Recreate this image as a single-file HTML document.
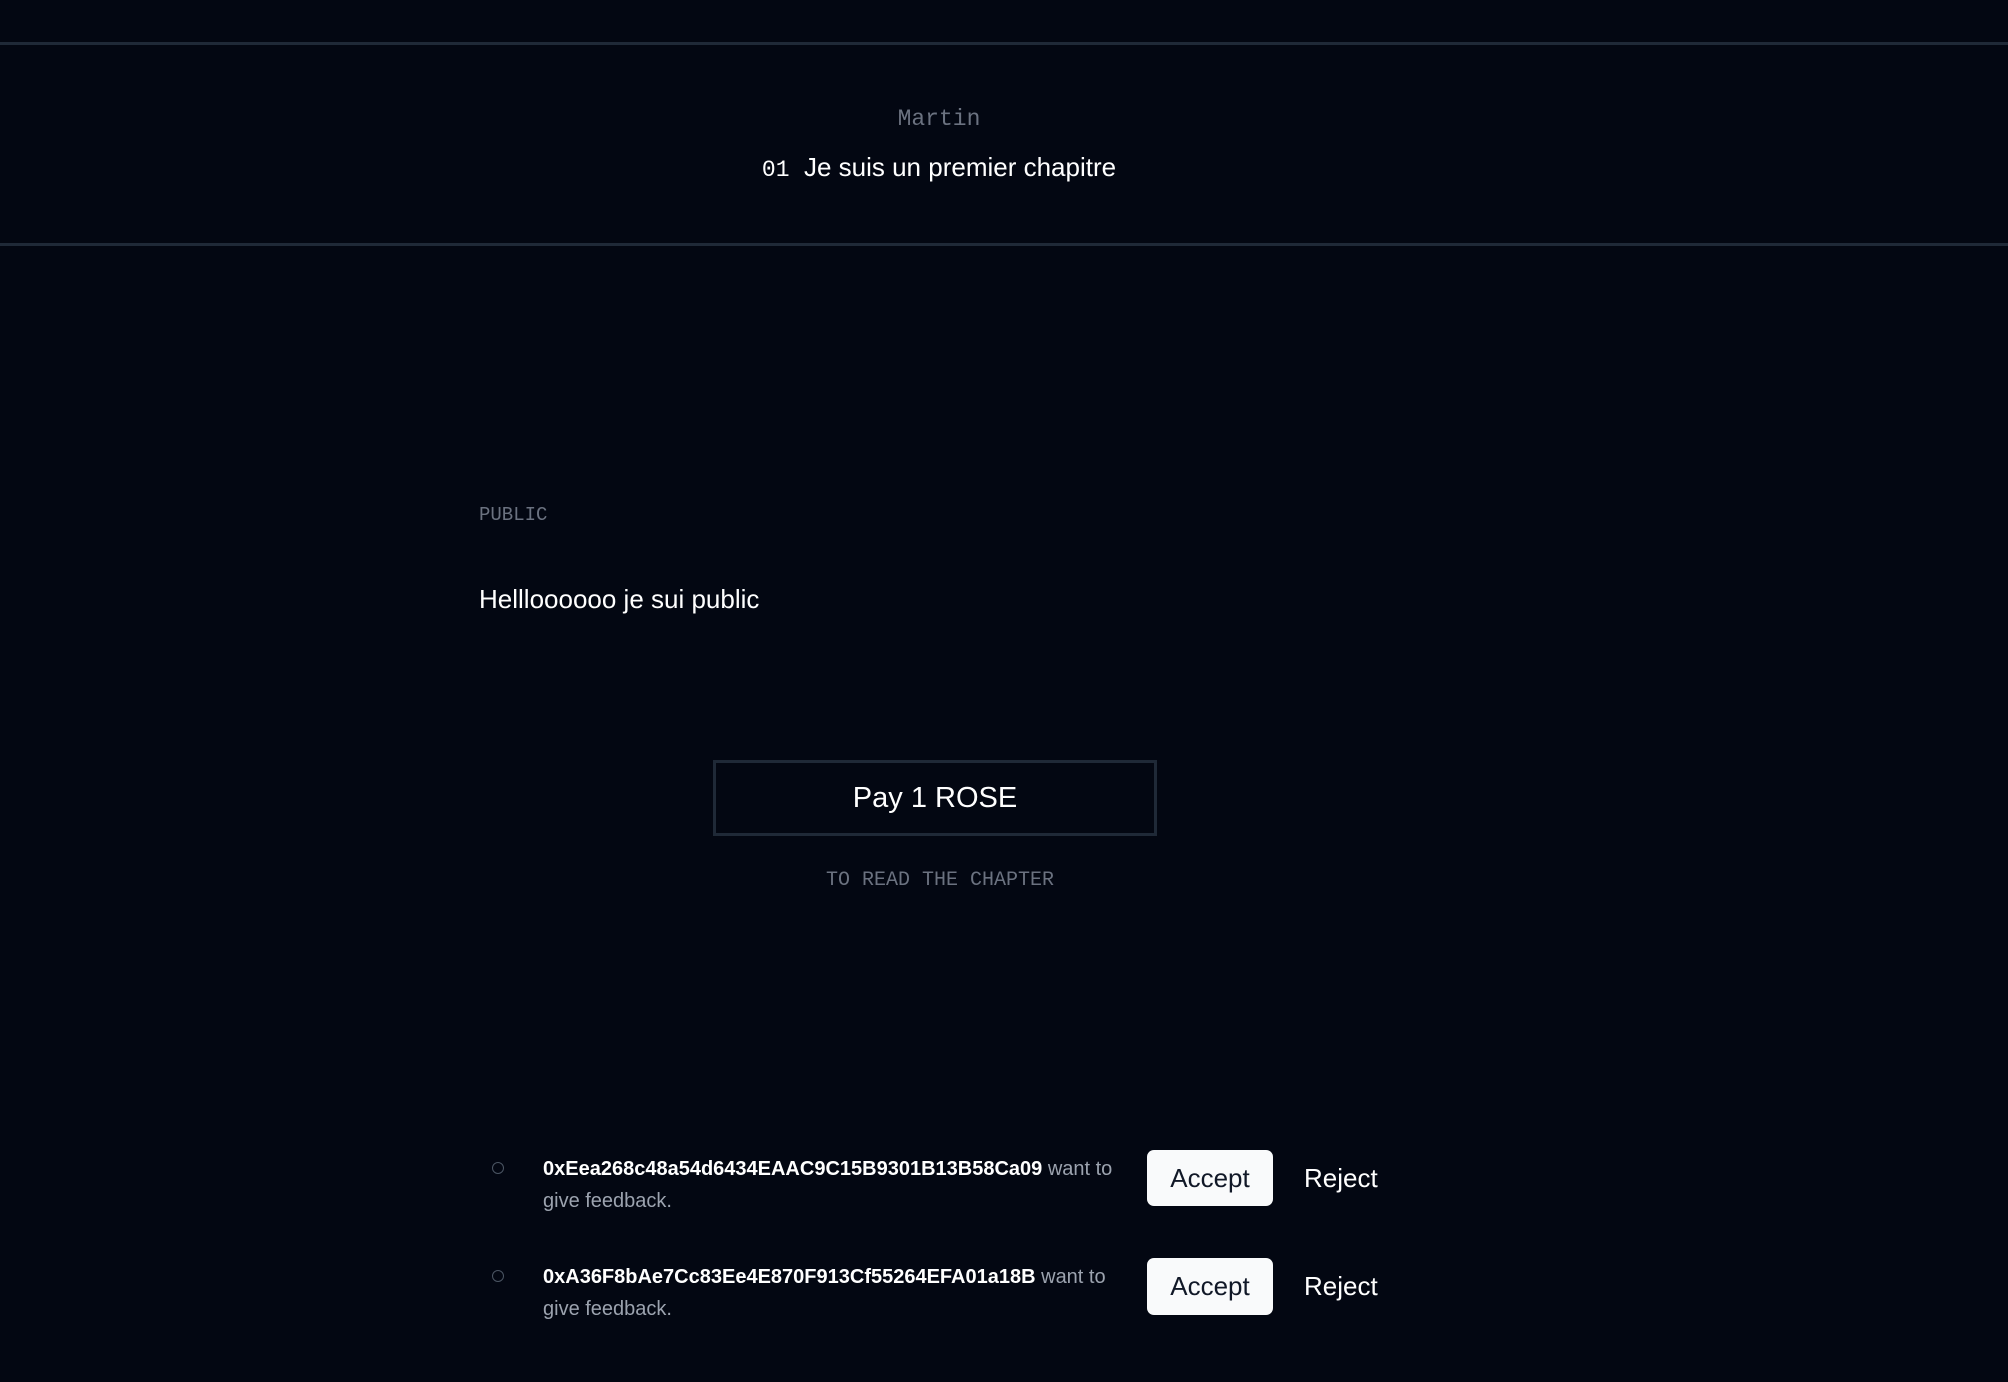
<!DOCTYPE html>
<html><head><meta charset="utf-8"><style>
*{margin:0;padding:0;box-sizing:border-box}
body{width:2008px;height:1382px;background:#030712;color:#fff;font-family:"Liberation Sans",sans-serif;position:relative;overflow:hidden}
.mono{font-family:"Liberation Mono","DejaVu Sans Mono",monospace}
.abs{position:absolute}
.line{position:absolute;left:0;width:2008px;height:3px;background:#1f2937}
</style></head><body>
<div class="line" style="top:42px"></div>
<div class="abs mono" style="left:0;width:1878px;top:106px;text-align:center;font-size:23px;color:#6b7280">Martin</div>
<div class="abs" style="left:0;width:1878px;top:152px;text-align:center;font-size:26px;color:#fff"><span class="mono" style="font-size:23px">01</span>&nbsp; Je suis un premier chapitre</div>
<div class="line" style="top:243px"></div>
<div class="abs mono" style="left:479px;top:504px;font-size:19px;color:#6b7280">PUBLIC</div>
<div class="abs" style="left:479px;top:584px;font-size:26px;color:#fff">Hellloooooo je sui public</div>
<div class="abs" style="left:713px;top:760px;width:444px;height:76px;border:3px solid #1f2937;text-align:center;line-height:71px;font-size:29px">Pay 1 ROSE</div>
<div class="abs mono" style="left:0;width:1880px;top:869px;text-align:center;font-size:20px;color:#6b7280">TO READ THE CHAPTER</div>

<div class="abs" style="left:492px;top:1162px;width:12px;height:12px;border:1.5px solid #4b5563;border-radius:50%"></div>
<div class="abs" style="left:543px;top:1153px;width:590px;font-size:20px;line-height:32px;color:#9ca3af"><span style="color:#fff;font-weight:bold">0xEea268c48a54d6434EAAC9C15B9301B13B58Ca09</span> want to give feedback.</div>
<div class="abs" style="left:1147px;top:1150px;width:126px;height:56px;background:#f9fafb;border-radius:7px;color:#111827;font-size:26px;text-align:center;line-height:56px">Accept</div>
<div class="abs" style="left:1304px;top:1150px;height:56px;line-height:56px;font-size:26px;color:#fff">Reject</div>

<div class="abs" style="left:492px;top:1270px;width:12px;height:12px;border:1.5px solid #4b5563;border-radius:50%"></div>
<div class="abs" style="left:543px;top:1261px;width:575px;font-size:20px;line-height:32px;color:#9ca3af"><span style="color:#fff;font-weight:bold">0xA36F8bAe7Cc83Ee4E870F913Cf55264EFA01a18B</span> want to give feedback.</div>
<div class="abs" style="left:1147px;top:1258px;width:126px;height:57px;background:#f9fafb;border-radius:7px;color:#111827;font-size:26px;text-align:center;line-height:57px">Accept</div>
<div class="abs" style="left:1304px;top:1258px;height:57px;line-height:57px;font-size:26px;color:#fff">Reject</div>
</body></html>
